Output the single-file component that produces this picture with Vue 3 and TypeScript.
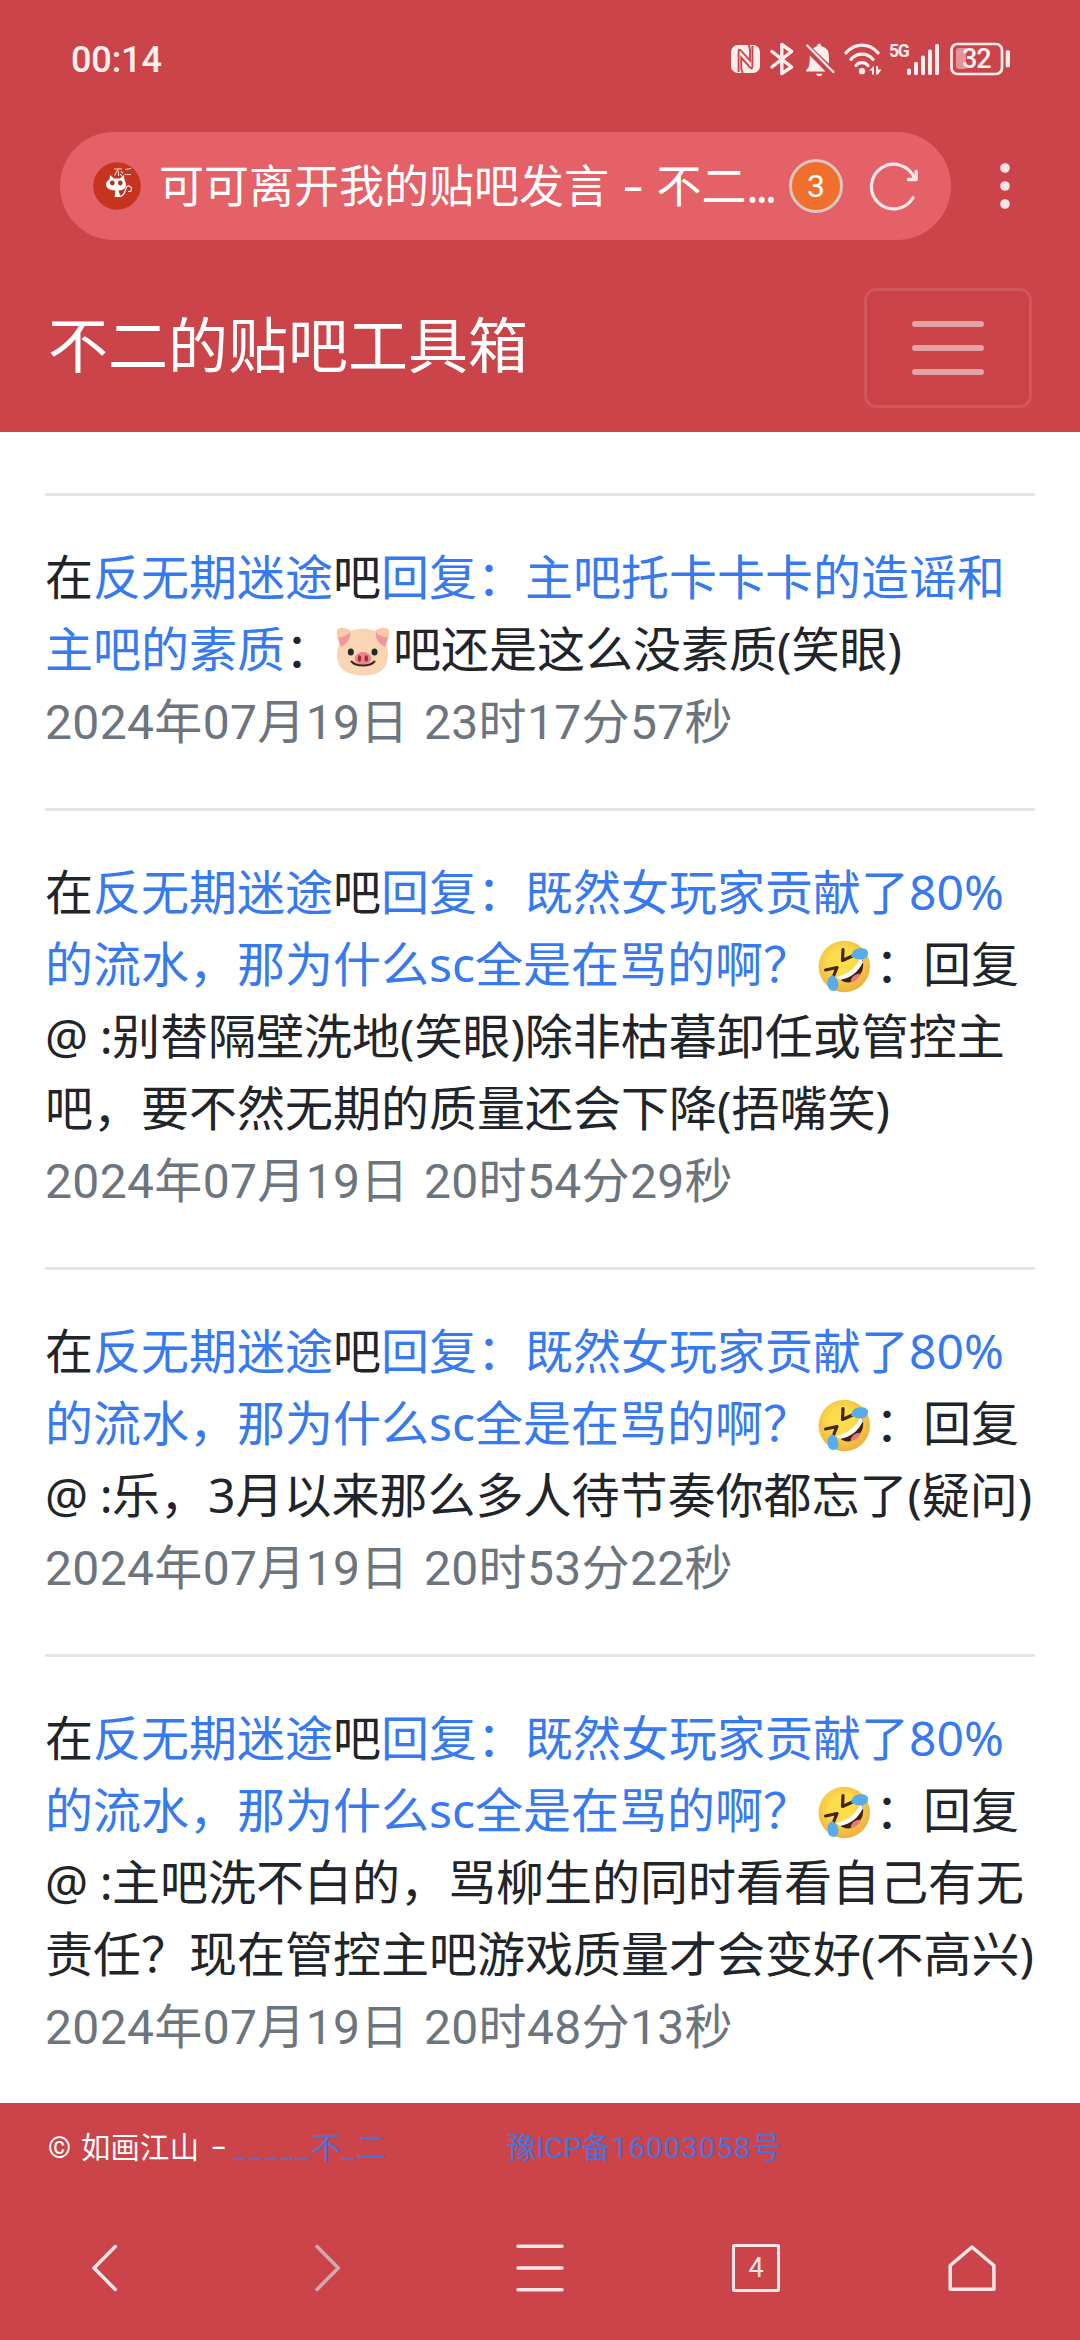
<script setup lang="ts">
type Kind = 'text' | 'link' | 'pig' | 'rofl' | 'at'
interface Seg { k: Kind; t?: string }
interface Post { lines: Seg[][]; time: string }

const link = (t: string): Seg => ({ k: 'link', t })
const text = (t: string): Seg => ({ k: 'text', t })

const topicHead: Seg[] = [text('在'), link('反无期迷途'), text('吧'), link('回复：既然女玩家贡献了80%')]
const topicTail: Seg[] = [link('的流水，那为什么sc全是在骂的啊？'), { k: 'rofl' }, text('：回复')]
const at: Seg = { k: 'at', t: '@ :' }

const posts: Post[] = [
  {
    lines: [
      [text('在'), link('反无期迷途'), text('吧'), link('回复：主吧托卡卡卡的造谣和')],
      [link('主吧的素质'), text('：'), { k: 'pig' }, text('吧还是这么没素质(笑眼)')],
    ],
    time: '2024年07月19日 23时17分57秒',
  },
  {
    lines: [
      topicHead,
      topicTail,
      [at, text('别替隔壁洗地(笑眼)除非枯暮卸任或管控主')],
      [text('吧，要不然无期的质量还会下降(捂嘴笑)')],
    ],
    time: '2024年07月19日 20时54分29秒',
  },
  {
    lines: [topicHead, topicTail, [at, text('乐，3月以来那么多人待节奏你都忘了(疑问)')]],
    time: '2024年07月19日 20时53分22秒',
  },
  {
    lines: [
      topicHead,
      topicTail,
      [at, text('主吧洗不白的，骂柳生的同时看看自己有无')],
      [text('责任？现在管控主吧游戏质量才会变好(不高兴)')],
    ],
    time: '2024年07月19日 20时48分13秒',
  },
]
</script>

<template>
  <div class="screen">
    <header class="top">
      <div class="status">
        <span class="clock">00:14</span>
        <div class="tray">
          <svg class="nfc" width="29" height="28" viewBox="0 0 29 28">
            <rect width="29" height="28" rx="7" fill="#fdeeee" />
            <path d="M7.6 27V6.2Q7.6 3.6 9.6 5.2L19 15.6V5Q19 2 17.4 0M21.4 1V21.6Q21.4 24.6 19 22.4L10.2 12.6V22.6Q10.2 26 12 28" fill="none" stroke="#cb4449" stroke-width="1.9" />
          </svg>
          <svg class="bt" width="24" height="34" viewBox="0 0 24 34">
            <path d="M2 9.5L21.5 25L11.8 31.5V2.5L21.5 9.5L2 25" fill="none" stroke="#fdeeee" stroke-width="3.4" stroke-linejoin="round" stroke-linecap="round" />
          </svg>
          <svg class="bell" width="30" height="34" viewBox="0 0 30 34">
            <path d="M1 28.5Q1 26.5 3.5 24.5Q4.8 22 4.8 12.5L20.5 28.5Z" fill="#fdeeee" />
            <path d="M8 5.5Q9.5 3.8 12 3.2Q12 .6 14.2 .6Q16.4 .6 16.4 3.2Q24 5 24 13V20.8Z" fill="#fdeeee" />
            <path d="M11 30.800H17.500Q16.500 33.300 14.200 33.300Q12 33.300 11 30.800Z" fill="#fdeeee" />
            <path d="M2.200 2.500L28.400 28.900" stroke="#fdeeee" stroke-width="2.200" stroke-linecap="round" />
          </svg>
          <svg class="wifi" width="38" height="33" viewBox="0 0 38 33">
            <g fill="none" stroke="#fdeeee" stroke-width="3.300" stroke-linecap="round">
              <path d="M2 9.800Q9 2.200 18 2.200T34 9.800" />
              <path d="M7 16.300Q11.500 11.200 18 11.200T29 16.300" />
              <path d="M12 22.500Q14.500 19.700 18 19.700T24 22.500" />
            </g>
            <circle cx="18" cy="28.200" r="3.100" fill="#fdeeee" />
            <path d="M25.300 27.500L30 23V31.500H28V27.500ZM32 23H34V26.500H37.500L34 31.500H32Z" fill="#fdeeee" />
          </svg>
          <span class="net">5G</span>
          <svg class="cell" width="33" height="33" viewBox="0 0 33 33" fill="#fdeeee">
            <rect x="0" y="25.500" width="4" height="6.500" rx="1.500" />
            <rect x="7" y="19" width="4" height="13" rx="1.500" />
            <rect x="14" y="12.500" width="4" height="19.500" rx="1.500" />
            <rect x="21" y="6.500" width="4" height="25.500" rx="1.500" />
            <rect x="28" y="1" width="4" height="31" rx="1.500" />
          </svg>
          <svg class="batt" width="61" height="34" viewBox="0 0 61 34">
            <rect x="1.500" y="2" width="50.500" height="30" rx="6" fill="none" stroke="#fdeeee" stroke-width="2.700" />
            <path d="M9 6H16V27H9Q6 27 6 24V9Q6 6 9 6Z" fill="#e3949a" />
            <rect x="55.700" y="8.300" width="4.300" height="17" rx="1.500" fill="#fdeeee" />
            <text x="12" y="26.300" class="pct" textLength="29.500">32</text>
          </svg>
        </div>
      </div>

      <div class="address">
        <div class="pill">
          <svg class="fav" width="48" height="48" viewBox="0 0 48 48">
            <circle cx="24" cy="24" r="23.800" fill="#c63420" />
            <g fill="none" stroke="#f4d3cb" stroke-width="1.100">
              <path d="M21 7H29M26 6L21.500 13.500M25.500 9V14M28 9.500L30 11M27 12L29 14" />
              <path d="M32 7.500L38 6.500M31.500 12.500H38" />
            </g>
            <path d="M17 13L21 16.500H27L31 13L31.500 18Q33 20 33 23Q33 28 25.500 28.500L27.500 35H21.500L22.500 28.500Q13 28 13 22.500Q13 19.500 16.500 17.500Z" fill="#fff" />
            <circle cx="19.300" cy="21" r="2.400" fill="#a8351f" />
            <circle cx="27.300" cy="21" r="2.400" fill="#a8351f" />
            <path d="M26.500 34.500Q31 34 32.500 28T37 24.500Q40 26 37.500 29.500H35" fill="none" stroke="#fff" stroke-width="1.200" />
          </svg>
          <span class="title">可可离开我的贴吧发言 <i>-</i> 不二<b>...</b></span>
          <span class="badge">3</span>
          <svg class="reload" width="50" height="50" viewBox="0 0 50 50">
            <path d="M44 36.800A22.300 22.300 0 1 1 45.500 17.500" fill="none" stroke="#fde9ea" stroke-width="3.200" stroke-linecap="round" />
            <path d="M47.200 10.500V18.500H39.500" fill="none" stroke="#fde9ea" stroke-width="3.400" stroke-linejoin="round" stroke-linecap="round" />
          </svg>
        </div>
        <svg class="more" width="10" height="46" viewBox="0 0 10 46" fill="#f5e4e6">
          <circle cx="5" cy="5" r="4.800" /><circle cx="5" cy="23" r="4.800" /><circle cx="5" cy="41" r="4.800" />
        </svg>
      </div>

      <nav class="navbar">
        <span class="brand">不二的贴吧工具箱</span>
        <button class="toggler" type="button" aria-label="menu">
          <svg width="90" height="90" viewBox="0 0 30 30">
            <path stroke="rgba(255,255,255,.5)" stroke-linecap="round" stroke-width="2" d="M4 7h22M4 15h22M4 23h22" />
          </svg>
        </button>
      </nav>
    </header>

    <main class="feed">
      <article v-for="(p, i) in posts" :key="i" class="post">
        <p v-for="(line, j) in p.lines" :key="j" class="line">
          <template v-for="(s, n) in line" :key="n">
            <svg v-if="s.k === 'pig'" class="emoji" viewBox="0 0 60 56">
              <path d="M30 4.500C46 4.500 55 16 55 31C55 45 46 51.500 30 51.500S4 45 4 31C4 16 14 4.500 30 4.500Z" fill="#fad5b4" />
              <path d="M4 6Q9 1 18 7Q17 15 8 22.500Q3 14 4 6Z" fill="#fbc9a6" />
              <path d="M56 6Q51 1 42 7Q43 15 52 22.500Q57 14 56 6Z" fill="#fbc9a6" />
              <path d="M5 13Q12 14 17 8Q19 17 8 23Z" fill="#f0969c" />
              <path d="M55 13Q48 14 43 8Q41 17 52 23Z" fill="#f0969c" />
              <ellipse cx="17.800" cy="28" rx="3" ry="3.500" fill="#26262b" />
              <ellipse cx="41.500" cy="28" rx="3" ry="3.500" fill="#26262b" />
              <ellipse cx="30" cy="34.500" rx="8.300" ry="6.500" fill="#e9868d" />
              <ellipse cx="26.500" cy="34.500" rx="1.700" ry="3.300" fill="#a32c3c" />
              <ellipse cx="33.300" cy="34.500" rx="1.700" ry="3.300" fill="#a32c3c" />
              <path d="M18.500 37.500Q22 41.500 30 41.500T41.500 37.500" fill="none" stroke="#3b2524" stroke-width="2" stroke-linecap="round" />
            </svg>
            <svg v-else-if="s.k === 'rofl'" class="emoji rofl" viewBox="0 0 60 56">
              <defs>
                <radialGradient id="face" cx=".45" cy=".4" r=".6">
                  <stop offset=".4" stop-color="#fbdc4b" /><stop offset="1" stop-color="#efb040" />
                </radialGradient>
              </defs>
              <circle cx="30.300" cy="27.500" r="25.700" fill="url(#face)" />
              <path d="M24.500 39.500Q42 36 48.500 20.500Q51.500 32 42.500 40Q34 47 24.500 39.500Z" fill="#42200f" />
              <path d="M22.500 38Q40 34 46.500 18.500L49 23Q42 38 26 41Z" fill="#fff" />
              <path d="M36.500 43.500Q37 35 47 34.500Q44.500 41.500 36.500 43.500Z" fill="#ea7480" />
              <path d="M29 10.500L28.500 21.500L38.500 17M11.500 31L23 28.500L19.500 37" fill="none" stroke="#47250f" stroke-width="3.200" stroke-linecap="round" stroke-linejoin="round" />
              <path d="M37 17.500Q38 10.500 44 9.500Q53 8 54 13Q54.500 19 48 20.500Q43 21 37 17.500Z" fill="#59aceb" />
              <path d="M18.500 36Q13 38.500 13.500 45Q14 52 19.500 52Q25 51 24.500 45Q23.500 39 18.500 36Z" fill="#59aceb" />
            </svg>
            <a v-else-if="s.k === 'link'" class="run link">{{ s.t }}</a>
            <span v-else-if="s.k === 'at'" class="run at">{{ s.t }}</span>
            <span v-else class="run">{{ s.t }}</span>
          </template>
        </p>
        <p class="line time"><span class="stamp">{{ p.time }}</span></p>
      </article>
    </main>

    <footer class="foot">
      <div class="legal">
        <span class="copy">© 如画江山 <i>-</i></span>
        <a class="owner"><u>_____</u>不<u>_</u>二</a>
        <a class="icp">豫ICP备<s>16003058</s>号</a>
      </div>
      <div class="tools">
        <div class="tool">
          <svg width="48" height="48" viewBox="0 0 48 48"><path d="M31.300 2.500L10 24L31.300 45.500" class="st" /></svg>
        </div>
        <div class="tool">
          <svg width="48" height="48" viewBox="0 0 48 48"><path d="M17 2.500L38.300 24L17 45.500" class="st dim" /></svg>
        </div>
        <div class="tool">
          <svg width="48" height="48" viewBox="0 0 48 48"><path d="M2 2.200H46M2 24H46M2 45.800H46" class="st" /></svg>
        </div>
        <div class="tool"><span class="tabs">4</span></div>
        <div class="tool">
          <svg width="48" height="48" viewBox="0 0 48 48"><path d="M24 3L45.900 21.500V45.300H2.200V21.500Z" class="st" /></svg>
        </div>
      </div>
    </footer>
  </div>
</template>

<style>
body { margin: 0; background: #fff; }
</style>

<style scoped>
.screen {
  width: 1080px;
  height: 2340px;
  display: flex;
  flex-direction: column;
  overflow: hidden;
  background: #fff;
  font-family: "Noto Sans", "Noto Sans CJK SC", sans-serif;
}
.top { background: #cb4449; height: 432px; flex: none; }
.status {
  height: 132px;
  box-sizing: border-box;
  padding: 42px 69px 0 71px;
  display: flex;
  justify-content: space-between;
  align-items: flex-start;
}
.clock { font: 500 36px/36px Roboto, sans-serif; letter-spacing: -.1px; color: #fdeeee; }
.tray { display: flex; align-items: flex-start; }
.tray svg { display: block; }
.nfc { margin: 3px 10px 0 0; }
.bt { margin-right: 11px; }
.bell { margin: 1px 9px 0 0; }
.wifi { margin: 1px 7px 0 0; }
.cell { margin: 1px 10px 0 0; }
.net {
  width: 18px;
  font: 700 17.5px/18px "Liberation Sans Narrow", Roboto, sans-serif;
  letter-spacing: -1.2px;
  color: #fdeeee;
}
.pct { font: 500 27px Roboto, sans-serif; fill: #fdf3f3; }

.address { display: flex; align-items: center; height: 108px; padding-left: 60px; }
.pill {
  width: 891px;
  height: 108px;
  box-sizing: border-box;
  border-radius: 54px;
  background: #e46167;
  display: flex;
  align-items: center;
  padding-left: 33px;
}
.fav { margin-right: 18px; flex: none; }
.title {
  width: 630px;
  flex: none;
  font-size: 45px;
  line-height: 60px;
  color: #fff;
  white-space: pre;
}
.title i {
  display: inline-block;
  width: 24px;
  text-align: center;
  font-style: normal;
  line-height: 1;
  transform: translateY(-2px) scaleX(1.5);
}
.title b { font-weight: 400; letter-spacing: -2.8px; }
.badge {
  width: 54px;
  height: 54px;
  flex: none;
  box-sizing: border-box;
  border: 3px solid #dcc6c4;
  border-radius: 50%;
  background: #ee702c;
  color: #fff;
  font: 400 32px/48px Roboto, sans-serif;
  text-align: center;
}
.reload { margin-left: 26px; }
.more { margin-left: 49px; }

.navbar { display: flex; align-items: center; justify-content: space-between; padding: 48px 48px 0; }
.brand { font-size: 60px; line-height: 90px; margin-bottom: 6px; color: #fff; }
.toggler {
  width: 168px;
  height: 120px;
  padding: 0;
  display: flex;
  align-items: center;
  justify-content: center;
  background: none;
  border: 3px solid rgba(255, 255, 255, .1);
  border-radius: 12px;
}

.feed { padding: 61px 45px 0; height: 1671px; box-sizing: border-box; flex: none; }
.post { border-top: 3px solid #e5e5e5; padding: 48px 0; }
.line {
  margin: 0;
  height: 72px;
  display: flex;
  align-items: center;
  font-size: 48px;
  line-height: 72px;
  white-space: pre;
  color: #212529;
}
.run { margin-bottom: 6px; }
.link { color: #377af0; }
.at { letter-spacing: -.5px; }
.emoji { width: 60px; height: 56px; flex: none; }
.rofl { margin: 0 1px 0 3px; }
.time {
  color: #6c757d;
  font-family: Roboto, "Noto Sans CJK SC", sans-serif;
  letter-spacing: .35px;
  word-spacing: 3px;
}
.stamp { margin-bottom: 2px; }

.foot { flex: 1; background: #cb4449; display: flex; flex-direction: column; }
.legal {
  height: 93px;
  box-sizing: border-box;
  padding: 23px 48px 0;
  display: flex;
  font: 29.3px/44px Roboto, "Noto Sans CJK SC", sans-serif;
  white-space: pre;
}
.copy { width: 185px; color: #fff; letter-spacing: .3px; word-spacing: 2px; }
.copy i {
  display: inline-block;
  width: 16px;
  text-align: center;
  font-style: normal;
  line-height: 1;
  transform: translate(2px, -1px) scaleX(1.7);
}
.owner { width: 274px; color: #4773dd; }
.owner u { text-decoration: none; letter-spacing: 2.5px; color: #7763ae; }
.icp { color: #4773dd; }
.icp s { text-decoration: none; letter-spacing: 1.1px; }
.tools { display: flex; height: 144px; }
.tool { flex: 1; display: flex; align-items: center; justify-content: center; }
.st { fill: none; stroke: #fce6e7; stroke-width: 3.5; stroke-linecap: round; stroke-linejoin: round; }
.dim { stroke: #d3a9ad; }
.tabs {
  width: 48px;
  height: 48px;
  box-sizing: border-box;
  border: 3.5px solid #fce6e7;
  border-radius: 2px;
  color: #fce6e7;
  font: 400 27px/42px Roboto, sans-serif;
  text-align: center;
}
</style>
